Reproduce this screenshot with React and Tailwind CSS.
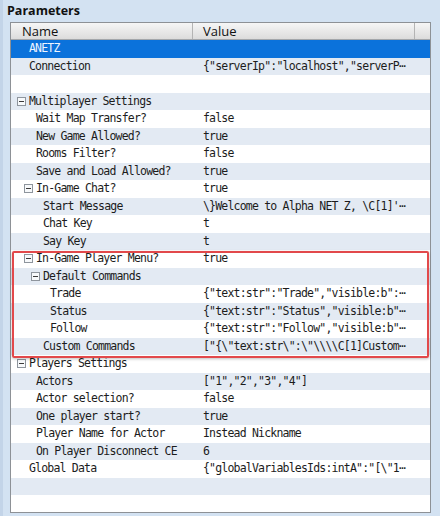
import React from "react";

const rows = [
  { name: "ANETZ", level: 0, selected: true },
  { name: "Connection", level: 0, value: '{"serverIp":"localhost","serverP⋯' },
  { name: "", level: 0 },
  { name: "Multiplayer Settings", level: 0, toggle: true },
  { name: "Wait Map Transfer?", level: 1, value: "false" },
  { name: "New Game Allowed?", level: 1, value: "true" },
  { name: "Rooms Filter?", level: 1, value: "false" },
  { name: "Save and Load Allowed?", level: 1, value: "true" },
  { name: "In-Game Chat?", level: 1, toggle: true, value: "true" },
  { name: "Start Message", level: 2, value: "\\}Welcome to Alpha NET Z, \\C[1]'⋯" },
  { name: "Chat Key", level: 2, value: "t" },
  { name: "Say Key", level: 2, value: "t" },
  { name: "In-Game Player Menu?", level: 1, toggle: true, value: "true" },
  { name: "Default Commands", level: 2, toggle: true },
  { name: "Trade", level: 3, value: '{"text:str":"Trade","visible:b":⋯' },
  { name: "Status", level: 3, value: '{"text:str":"Status","visible:b"⋯' },
  { name: "Follow", level: 3, value: '{"text:str":"Follow","visible:b"⋯' },
  { name: "Custom Commands", level: 2, value: '["{\\"text:str\\":\\"\\\\\\\\C[1]Custom⋯' },
  { name: "Players Settings", level: 0, toggle: true },
  { name: "Actors", level: 1, value: '["1","2","3","4"]' },
  { name: "Actor selection?", level: 1, value: "false" },
  { name: "One player start?", level: 1, value: "true" },
  { name: "Player Name for Actor", level: 1, value: "Instead Nickname" },
  { name: "On Player Disconnect CE", level: 1, value: "6" },
  { name: "Global Data", level: 0, value: '{"globalVariablesIds:intA":"[\\"1⋯' },
  { name: "", level: 0 },
];

const levelPad = ["pl-[6px]", "pl-[13px]", "pl-[20px]", "pl-[27px]"];

function Toggle() {
  return (
    <div className="w-[9px] h-[9px] mr-[3px] border border-[#8e959d] bg-[#f7f9fb] flex items-center justify-center shrink-0">
      <div className="w-[5px] h-[1px] bg-[#3b3b3b]" />
    </div>
  );
}

export default function App() {
  return (
    <div className="w-[440px] h-[516px] bg-[#d3e2f2] relative overflow-hidden" style={{ fontFamily: "'Open Sans', 'Noto Sans', sans-serif" }}>
      <div className="absolute left-0 top-0 w-[3px] h-[516px] bg-[#c3d4e8]" />
      <div className="h-[22px] pl-[7px] flex items-center text-[12.5px] font-bold text-[#111] leading-none">
        Parameters
      </div>
      <div className="ml-[10px] w-[421px] h-[491px] border border-[#8d9196] bg-white relative">
        <div className="flex h-[17px] border-b border-[#a3a6aa] bg-gradient-to-b from-[#f6f6f6] to-[#dcdcdc] text-[13px] text-[#111] leading-none">
          <div className="w-[182px] border-r border-[#b4b4b4] pl-[11px] flex items-center">Name</div>
          <div className="w-[222px] border-r border-[#b4b4b4] pl-[10px] flex items-center">Value</div>
          <div className="flex-1" />
        </div>
        <div className="text-[11.5px] tracking-[-0.8px] leading-none" style={{ fontFamily: "'DejaVu Sans Mono', monospace" }}>
          {rows.map((r, i) => {
            const bg = r.selected ? "bg-[#0b72db] text-[#eef4ff]" : i % 2 === 1 ? "bg-[#e3eaf3] text-[#1c1c1c]" : "bg-white text-[#1c1c1c]";
            return (
              <div key={i} className={"flex h-[17.5px] items-center " + bg}>
                <div className={"w-[182px] flex items-center whitespace-pre " + levelPad[r.level]}>
                  {r.toggle ? <Toggle /> : <div className="w-[12px] shrink-0" />}
                  <span>{r.name}</span>
                </div>
                <div className="pl-[10px] whitespace-pre">{r.value || ""}</div>
              </div>
            );
          })}
        </div>
        <div className="absolute left-[1px] top-[228px] w-[417px] h-[107px] border-2 border-[#e2494b] rounded-[2px] shadow-[0_1px_3px_rgba(0,0,0,0.25)] pointer-events-none" />
      </div>
    </div>
  );
}
